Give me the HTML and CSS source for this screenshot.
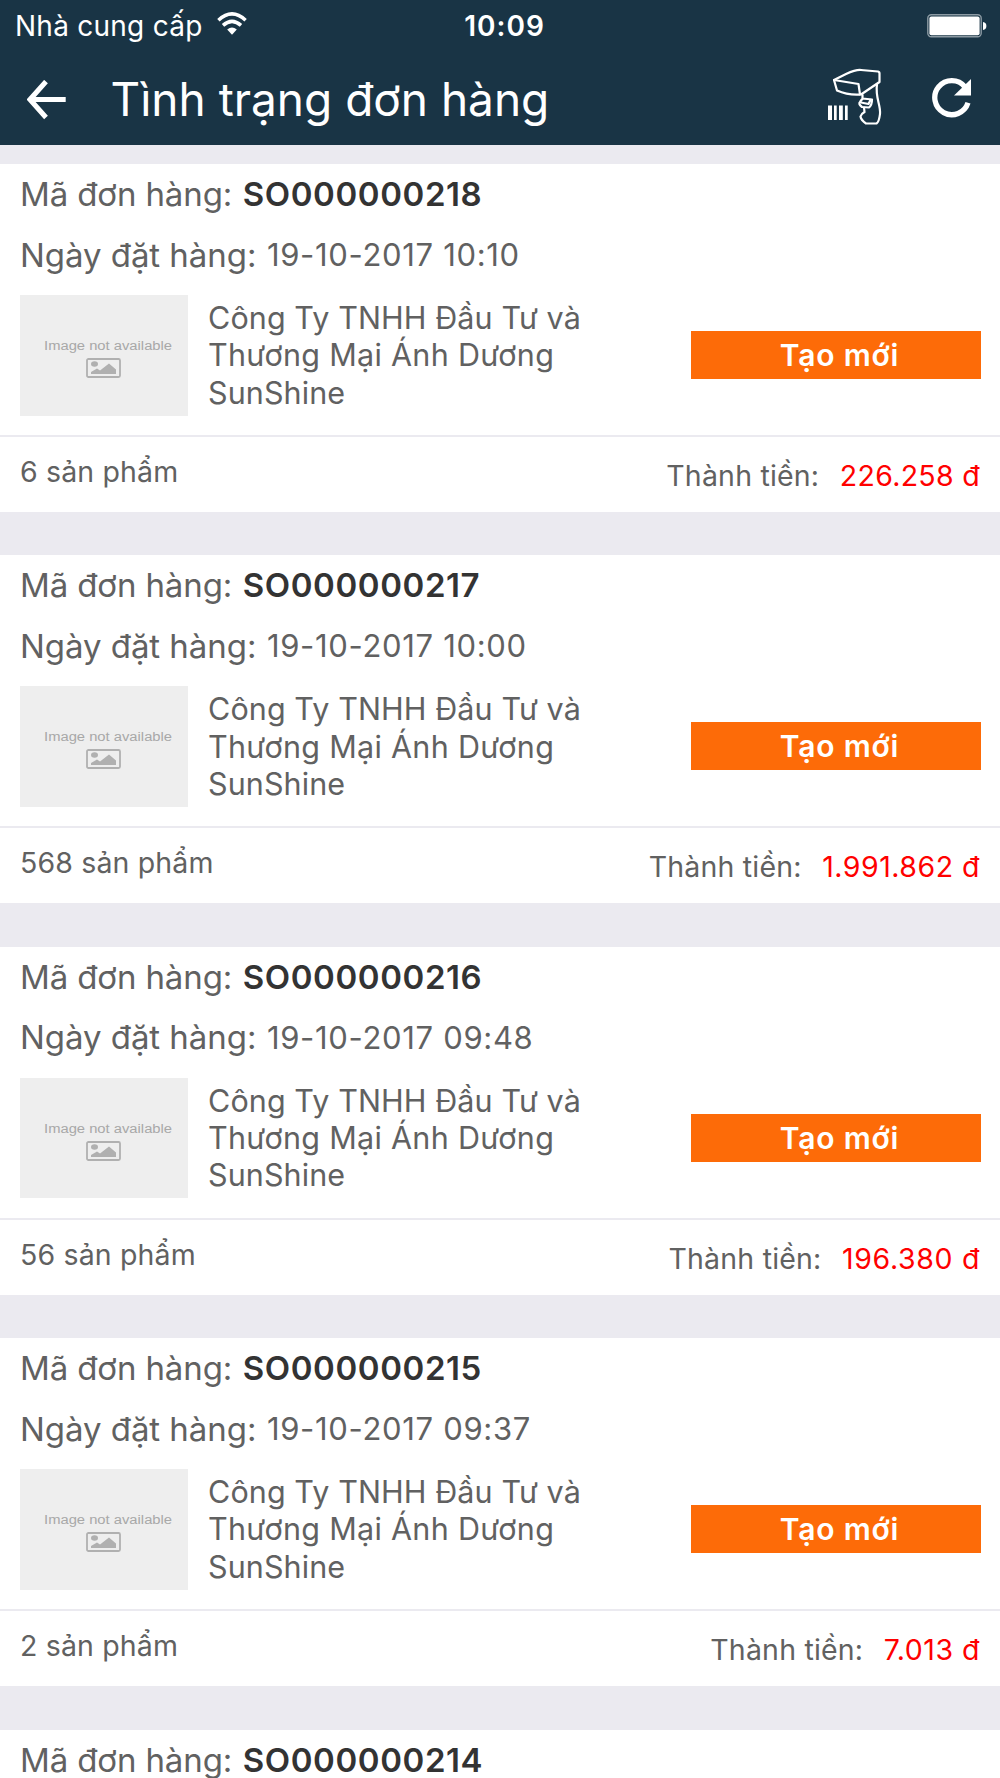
FILE: index.html
```html
<!DOCTYPE html>
<html lang="vi">
<head>
<meta charset="utf-8">
<title>Tình trạng đơn hàng</title>
<link rel="stylesheet" href="styles.css">
</head>
<body>
<header class="header">
  <div class="status">
    <div class="carrier"><span class="carrier-name">Nhà cung cấp</span>
      <svg class="wifi" viewBox="0 0 30 24"><g fill="none" stroke="#fff" stroke-width="3.5"><path d="M1.4 8.2Q15 -4.4 28.6 8.2"/><path d="M6 13.4Q15 5.2 24 13.4"/></g><path d="M10.2 17.6Q15 13.6 19.8 17.6L15 22.8Z" fill="#fff"/></svg>
    </div>
    <time class="clock">10:09</time>
    <svg class="battery" viewBox="0 0 60 24"><rect x=".8" y=".8" width="53.4" height="22" rx="3.5" fill="none" stroke="#8c9aa3" stroke-width="1.4"/><rect x="2.4" y="2.4" width="50.2" height="18.8" rx="2" fill="#fff"/><path d="M56 8Q59.4 8.5 59.4 12T56 16Z" fill="#fff"/></svg>
  </div>
  <nav class="navbar">
    <svg class="back" viewBox="0 0 40 40"><path d="M19 1.5L3 19.5L19 37.5M3 19.5H38.7" fill="none" stroke="#fff" stroke-width="5"/></svg>
    <h1 class="title">Tình trạng đơn hàng</h1>
    <svg class="scanner" viewBox="0 0 54 58"><g fill="none" stroke="#fff" stroke-width="2.2" stroke-linejoin="round" stroke-linecap="round"><path d="M6 12L18 6Q28 1.500 33 2L50 3.500Q51.800 4 51.500 6V14L33 26.500Q20 27.500 9 22.500Z"/><path d="M6 12L30.500 16L32 26.500"/><path d="M49 16C47 30 53 37 52 46Q51 54 48.500 55.500H38Q33 52 32.500 48.500Q33 46 36.500 44L36 39.500"/><path d="M34.500 27V30.500M34.500 30.500L44 31.500Q44 37 41 39.500L34 39Q30 36 32 34Z"/><path d="M33 34.500L40.500 36L42.500 32"/></g><path fill="#fff" d="M0 37.500h4v14.500H0zM6 37.500h2.700v14.500H6zM11 37.500h3.800v14.500H11zM17 37.500h2.700v14.500H17z"/></svg>
    <svg class="refresh" viewBox="0 0 40 40"><path d="M36 24.800A17 17 0 1 1 33 9" fill="none" stroke="#fff" stroke-width="5.300"/><path d="M39 1V17.500H22Z" fill="#fff"/></svg>
  </nav>
</header>
<main class="orders">
  <div id="orders"></div>
  <article class="order">
    <p class="row"><span class="code-label">Mã đơn hàng:</span><b class="code-value">SO000000214</b></p>
  </article>
</main>
<template id="order">
  <article class="order">
    <p class="row"><span class="code-label">Mã đơn hàng:</span><b class="code-value"></b></p>
    <p class="row date"><span class="date-label">Ngày đặt hàng:</span><span class="date-value"></span></p>
    <div class="body">
      <div class="thumb"><span class="thumb-text">Image not available</span>
        <svg class="thumb-icon" viewBox="0 0 35 20"><rect x="1" y="1" width="33" height="18" rx="1.5" fill="none" stroke="#b0b0b0" stroke-width="1.8"/><ellipse cx="8.5" cy="6" rx="3.5" ry="2.7" fill="#b0b0b0"/><path d="M5 16V14L11 10.5L14 12.5L23 5.5L30 11.5V16Z" fill="#b0b0b0"/></svg>
      </div>
      <div class="company">Công Ty TNHH Đầu Tư và<br><span class="company-mid">Thương Mại Ánh Dương</span><br>SunShine</div>
      <span class="badge">Tạo mới</span>
    </div>
    <footer class="foot"><span class="count"></span><span class="total"><span class="total-label">Thành tiền:</span><span class="price"></span></span></footer>
  </article>
</template>
<script src="orders.js"></script>
</body>
</html>
```
FILE: orders.js
```js
const orders = [
  ['SO000000218', '19-10-2017 10:10', '6 sản phẩm', '226.258 đ'],
  ['SO000000217', '19-10-2017 10:00', '568 sản phẩm', '1.991.862 đ'],
  ['SO000000216', '19-10-2017 09:48', '56 sản phẩm', '196.380 đ'],
  ['SO000000215', '19-10-2017 09:37', '2 sản phẩm', '7.013 đ']
];
const list = document.getElementById('orders');
const template = document.getElementById('order');
orders.forEach((values) => {
  const card = template.content.cloneNode(true);
  ['.code-value', '.date-value', '.count', '.price'].forEach((selector, i) => {
    card.querySelector(selector).textContent = values[i];
  });
  list.append(card);
});
```
FILE: styles.css
```css
* { box-sizing: border-box; }
body { margin: 0; height: 1778px; overflow: hidden; background: #ebeaf0; color: #616161; font-family: Inter, "Liberation Sans", sans-serif; }
p, h1 { margin: 0; font-weight: 400; }
svg { display: block; flex: none; }
.header { height: 145px; background: #193445; color: #fff; }
.status { height: 51px; display: grid; grid-template-columns: 1fr auto 1fr; align-items: center; padding: 0 13px 0 15px; }
.carrier { display: flex; align-items: center; gap: 14px; font-size: 28px; letter-spacing: .25px; }
.wifi { width: 30px; height: 24px; margin-top: -3px; }
.clock { font-size: 28px; font-weight: 600; letter-spacing: 1px; padding-left: 7px; }
.battery { width: 60px; height: 24px; justify-self: end; }
.navbar { height: 94px; display: flex; align-items: center; padding: 0 28px 0 27px; }
.back { width: 40px; height: 40px; margin-top: 3px; }
.title { margin: 2px 0 0 43.5px; font-size: 46px; flex: 1; white-space: nowrap; }
.scanner { width: 54px; height: 58px; margin: -3px 50px 0 0; }
.refresh { width: 40px; height: 40px; margin-top: -1px; }
.orders { height: 1633px; padding-top: 19px; overflow: hidden; }
.order { height: 348px; margin-bottom: 43.4px; background: #fff; white-space: nowrap; }
.row { height: 60px; padding-left: 20px; display: flex; align-items: center; font-size: 33px; letter-spacing: -.12px; }
.date { padding-top: 1px; }
.code-value { margin-left: 10.5px; color: #333; font-weight: 600; letter-spacing: .6px; }
.date-label { letter-spacing: -.05px; }
.date-value { margin-left: 10.5px; font-size: 31px; letter-spacing: .68px; }
.body { height: 151px; display: flex; padding: 11px 19.5px 0; }
.thumb { width: 168.5px; height: 120.5px; background: #eee; display: flex; flex-direction: column; align-items: center; padding-top: 43px; }
.thumb-text { font: 12px/16px "Liberation Sans", sans-serif; color: #a8a8a8; margin-left: 9px; transform: scaleX(1.23); }
.thumb-icon { width: 35px; height: 20px; margin-top: 4px; }
.company { margin-left: 20px; padding-top: 4px; font-size: 30.5px; line-height: 37.3px; letter-spacing: .1px; flex: 1; }
.company-mid { letter-spacing: .3px; }
.badge { margin-top: 36px; padding-left: 8px; width: 290px; height: 48px; background: #fd6b08; color: #fff; font-weight: 600; font-size: 30px; letter-spacing: .8px; display: flex; align-items: center; justify-content: center; }
.foot { border-top: 2px solid #ebeaf0; height: 77px; display: flex; justify-content: space-between; padding: 18px 20px 0; font-size: 28.5px; line-height: 34px; letter-spacing: .15px; }
.total { padding-top: 4px; }
.total-label { letter-spacing: .2px; }
.price { color: #f00; margin-left: 20.5px; letter-spacing: .5px; }
.order:nth-child(1) .price { letter-spacing: .3px; }
.order:nth-child(3) .price { letter-spacing: .65px; }
```
